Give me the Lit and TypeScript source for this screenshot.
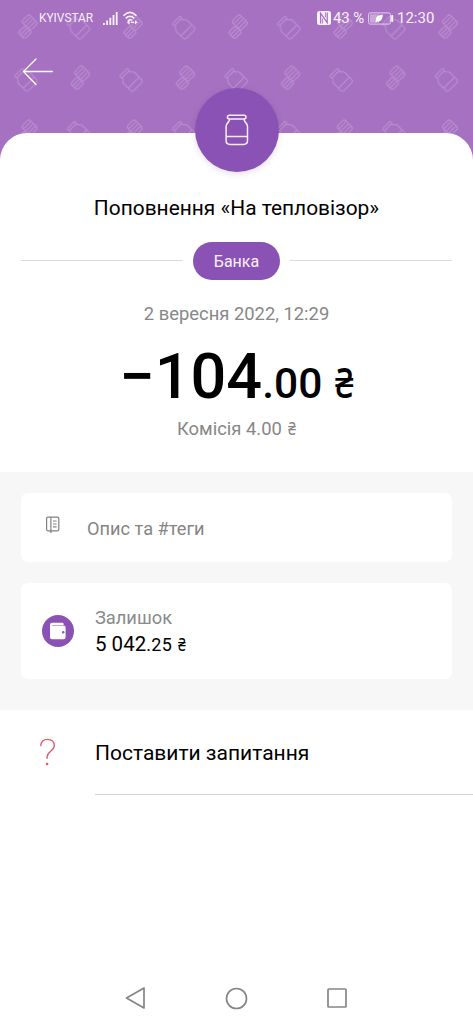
import { LitElement, html, css, svg } from "lit";
import { customElement } from "lit/decorators.js";

const jarGlyph = (x: number, y: number) => svg`
  <g transform="translate(${x} ${y}) rotate(-45) scale(0.95)">
    <rect x="-6" y="-11.5" width="12" height="3" rx="1.4"></rect>
    <path d="M-4.7 -8.5C-4.7 -6 -8.2 -5.8 -8.2 -2.6V7.2Q-8.2 9.8 -5.6 9.8H5.6Q8.2 9.8 8.2 7.2V-2.6C8.2 -5.8 4.7 -6 4.7 -8.5M-8.2 4H8.2"></path>
  </g>`;

const coinsGlyph = (x: number, y: number) => svg`
  <g transform="translate(${x} ${y})">
    <g transform="translate(1.6 -4.6) rotate(-45)">
      <rect x="-5.4" y="-6.4" width="10.8" height="12.8" rx="2.6"></rect>
      <path d="M-4.6 -3.2H4.6M-4.6 0H4.6M-4.6 3.2H4.6"></path>
    </g>
    <g transform="translate(-3.2 5.4) rotate(-45)">
      <rect x="-5" y="-4.6" width="10" height="9.2" rx="2.4"></rect>
      <path d="M-4.4 -1.5H4.4M-4.4 1.5H4.4"></path>
    </g>
  </g>`;

@customElement("app-root")
export class AppRoot extends LitElement {
  static styles = css`
    :host { display: block; width: 473px; height: 1024px; overflow: hidden; background: #fff; color: #000; font-family: Roboto, "Noto Sans", sans-serif; }
    * { box-sizing: border-box; }
    svg { display: block; flex: none; }
    .screen { height: 1024px; display: flex; flex-direction: column; }
    .hero { position: relative; flex: none; height: 162px; background: #a571c0; }
    .pattern { position: absolute; inset: 0; }
    .status { position: relative; display: flex; align-items: center; height: 36px; padding-left: 39px; color: #f9effc; white-space: nowrap; }
    .carrier { font-size: 11.9px; width: 64px; flex: none; }
    .wifi { margin-left: 4px; }
    .spacer { width: 177px; flex: none; }
    .pct { font-size: 15px; width: 35px; flex: none; margin-left: 2px; letter-spacing: -0.1px; }
    .clock { font-size: 15px; margin-left: 3px; }
    .back { position: relative; margin: 21px 0 0 22px; }
    .sheet { position: relative; flex: none; height: 339px; margin-top: -29px; background: #fff; border-radius: 27px 27px 0 0; display: flex; flex-direction: column; align-items: center; }
    .avatar { flex: none; width: 84px; height: 84px; margin-top: -45px; border-radius: 50%; background: #8a52b5; display: grid; place-items: center; box-shadow: 0 2px 6px rgba(60, 20, 90, 0.14); }
    .title { margin-top: 22px; font-size: 20.9px; line-height: 28px; white-space: nowrap; }
    .divider { flex: none; align-self: stretch; display: flex; align-items: center; gap: 10px; margin: 20px 21px 0; height: 37.5px; }
    .rule { flex: 1; height: 1px; background: #dcdcdc; }
    .tag { width: 87px; height: 37.5px; border-radius: 19px; background: #8a52b5; color: #fbf2ff; font-size: 16px; line-height: 39px; text-align: center; }
    .date { margin-top: 22.5px; font-size: 18.4px; line-height: 24px; color: #878787; white-space: nowrap; }
    .amount { margin-top: 13px; height: 76px; line-height: 76px; font-weight: 500; white-space: nowrap; }
    .whole { font-size: 63px; }
    .cents { font-size: 42.5px; }
    .uah { display: inline-block; width: 0.45em; margin-left: 0.07em; font-family: "Noto Sans", sans-serif; line-height: 1; transform: scaleX(0.78); transform-origin: left; }
    .amount .uah { margin-left: 0.04em; }
    .fee { margin-top: 2px; font-size: 18.4px; line-height: 24px; color: #878787; white-space: nowrap; }
    .panel { flex: none; height: 238px; background: #f7f7f7; padding: 20.5px 21px 0; display: flex; flex-direction: column; gap: 21px; }
    .card { background: #fff; border-radius: 7px; display: flex; align-items: center; }
    .note { height: 69.5px; padding-left: 23px; color: #858585; font-size: 18.2px; }
    .note-text { margin-left: 25px; padding-top: 2.5px; }
    .book { margin-top: -5px; }
    .rest { height: 96px; padding-left: 21px; }
    .balance { margin-left: 21px; padding-top: 2px; white-space: nowrap; }
    .label { font-size: 18.3px; line-height: 25px; color: #8a8a8a; }
    .value { font-size: 20.5px; line-height: 28px; }
    .minor { font-size: 18px; letter-spacing: 0.3px; }
    .ask { flex: none; height: 85px; display: flex; padding-left: 39px; }
    .ask svg { margin-top: 28px; }
    .ask-text { margin-left: 38px; flex: 1; border-bottom: 1px solid #d2d2d2; font-size: 21px; line-height: 86px; white-space: nowrap; }
    .nav { margin-top: auto; height: 52px; display: flex; justify-content: center; align-items: center; gap: 78px; }
  `;

  render() {
    return html`
      <div class="screen">
        <div class="hero">
          <svg class="pattern" width="473" height="162">
            <defs>
              <pattern id="tile" width="105.1" height="105" patternUnits="userSpaceOnUse">
                <g fill="none" stroke="#b88bd0" stroke-width="1.3">
                  ${coinsGlyph(28, 27)} ${jarGlyph(78.6, 27.8)}
                  ${jarGlyph(26, 80)} ${coinsGlyph(80.5, 78)}
                </g>
              </pattern>
            </defs>
            <rect width="473" height="162" fill="url(#tile)"></rect>
          </svg>
          <div class="status">
            <span class="carrier">KYIVSTAR</span>
            <svg width="15" height="13" viewBox="0 0 15 13" fill="#fbf4fd">
              <rect x="0" y="11" width="1.8" height="2"></rect>
              <rect x="3.2" y="8.5" width="1.8" height="4.5"></rect>
              <rect x="6.4" y="5.8" width="1.8" height="7.2"></rect>
              <rect x="9.6" y="3" width="1.8" height="10"></rect>
              <rect x="12.8" y="0" width="1.8" height="13"></rect>
            </svg>
            <svg class="wifi" width="18" height="14" viewBox="0 0 18 14" fill="none" stroke="#fbf4fd" stroke-width="1.6">
              <path d="M1.5 4.7Q8 -2 14.5 4.7M3.7 7.4Q8 3 12.3 7.4M6 10Q8 7.8 10 9.4"></path>
              <path d="M7.6 9.2V13.4L5 11.3ZM13 9.2V13.4L15.6 11.3Z" fill="#fbf4fd" stroke="none"></path>
              <path d="M9 11.3H12" stroke-width="1.4"></path>
            </svg>
            <span class="spacer"></span>
            <svg width="14" height="14" viewBox="0 0 14 14">
              <rect width="14" height="14" rx="2.5" fill="#fbf4fd"></rect>
              <path d="M3.6 12.6V2.2L10.2 11.6V1.4" fill="none" stroke="#a571c0" stroke-width="1.3"></path>
              <path d="M5.6 12.6V7.4M8.4 1.4V6.2" fill="none" stroke="#a571c0" stroke-width="0.9"></path>
            </svg>
            <span class="pct">43 %</span>
            <svg width="26" height="13" viewBox="0 0 26 13">
              <rect x="0.6" y="0.9" width="21.8" height="11.2" rx="1.5" fill="none" stroke="#e3cfec" stroke-width="1"></rect>
              <rect x="2" y="2.3" width="9" height="8.4" fill="#c9a7da"></rect>
              <path d="M14.8 2.4C10 3 7.6 4.6 8 8L7.3 10.4L9.2 9.4C13.2 9.6 14.6 7 14.8 2.4Z" fill="#fff"></path>
              <rect x="23.2" y="3" width="2" height="7" rx="0.8" fill="#fbf4fd"></rect>
            </svg>
            <span class="clock">12:30</span>
          </div>
          <svg class="back" width="32" height="29" viewBox="0 0 32 29" fill="none" stroke="#fff" stroke-width="1.3" stroke-linecap="round" stroke-linejoin="round">
            <path d="M14 2L1.5 14.5L14 27.5M1.5 14.5H30.3"></path>
          </svg>
        </div>

        <div class="sheet">
          <div class="avatar">
            <svg width="24" height="32" viewBox="0 0 24 32" fill="none" stroke="#fbeeff" stroke-width="1.5">
              <rect x="2.4" y="1.2" width="18.6" height="3.8" rx="1.9"></rect>
              <path d="M4.6 5C4.6 8.8 1.1 8.5 1.1 12.5V26.5Q1.1 30.4 5 30.4H18.6Q22.5 30.4 22.5 26.5V12.5C22.5 8.5 19 8.8 19 5M1.1 22.4H22.5"></path>
            </svg>
          </div>
          <div class="title">Поповнення «На тепловізор»</div>
          <div class="divider"><span class="rule"></span><span class="tag">Банка</span><span class="rule"></span></div>
          <div class="date">2 вересня 2022, 12:29</div>
          <div class="amount"><span class="whole">−104</span><span class="cents">.00 <span class="uah">₴</span></span></div>
          <div class="fee">Комісія 4.00 <span class="uah">₴</span></div>
        </div>

        <div class="panel">
          <div class="card note">
            <svg class="book" width="18" height="18" viewBox="0 0 18 18" fill="none" stroke="#808080" stroke-width="1.2">
              <rect x="2.6" y="1.2" width="12.2" height="13.6" rx="1.2"></rect>
              <path d="M6.9 1.2V17M9 5H12.6M9 8H12.6M9 10.9H12.6"></path>
            </svg>
            <span class="note-text">Опис та #теги</span>
          </div>
          <div class="card rest">
            <svg width="32" height="32" viewBox="0 0 32 32">
              <circle cx="16" cy="16" r="16" fill="#8a52b5"></circle>
              <path d="M8 10Q8 7.8 10 7.8H20.4Q21.6 7.8 21.6 9V9.9H10.2V10.5H21.8Q23.6 10.5 23.6 12.2V22.3Q23.6 24.2 21.7 24.2H10Q8 24.2 8 22.2Z" fill="#fff"></path>
              <circle cx="21.2" cy="17.2" r="1.2" fill="#8a52b5"></circle>
            </svg>
            <div class="balance">
              <div class="label">Залишок</div>
              <div class="value">5 042<span class="minor">.25 <span class="uah">₴</span></span></div>
            </div>
          </div>
        </div>

        <div class="ask">
          <svg width="18" height="30" viewBox="0 0 18 30" fill="none" stroke="#e3576b" stroke-width="1.3" stroke-linecap="round">
            <path d="M1.8 7.7C2 3.7 4.7 1.3 8.6 1.3C12.6 1.3 15.3 3.8 15.3 7.4C15.3 13.2 8.1 13.3 8.1 19V20.4"></path>
            <circle cx="8.1" cy="26" r="1.3" fill="#e3576b" stroke="none"></circle>
          </svg>
          <div class="ask-text">Поставити запитання</div>
        </div>

        <div class="nav">
          <svg width="22" height="24" viewBox="0 0 22 24" fill="none" stroke="#858585" stroke-width="1.7" stroke-linejoin="round"><path d="M1.5 12L19 2V22Z"></path></svg>
          <svg width="23" height="23" viewBox="0 0 23 23" fill="none" stroke="#858585" stroke-width="1.7"><circle cx="11.5" cy="11.5" r="10"></circle></svg>
          <svg width="22" height="22" viewBox="0 0 22 22" fill="none" stroke="#858585" stroke-width="1.7" stroke-linejoin="round"><rect x="2" y="2" width="18" height="18" rx="0.8"></rect></svg>
        </div>
      </div>
    `;
  }
}
